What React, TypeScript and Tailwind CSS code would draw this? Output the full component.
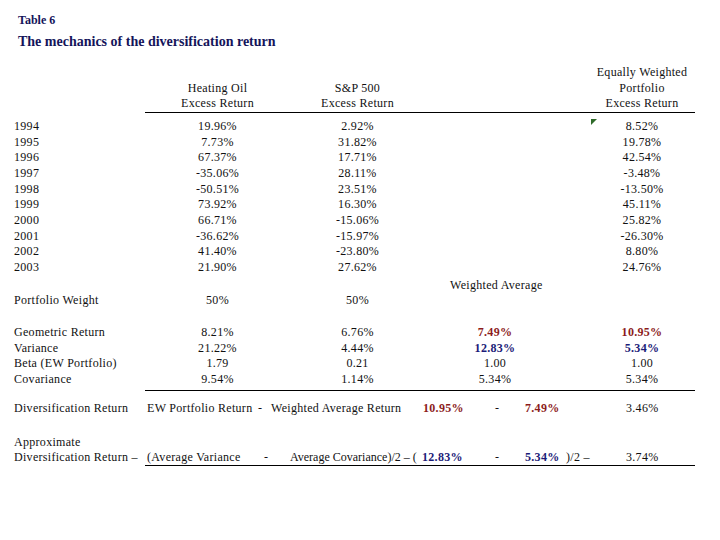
const YEARS = [
  { year: "1994", oil: "19.96%", spx: "2.92%", ew: "8.52%" },
  { year: "1995", oil: "7.73%", spx: "31.82%", ew: "19.78%" },
  { year: "1996", oil: "67.37%", spx: "17.71%", ew: "42.54%" },
  { year: "1997", oil: "-35.06%", spx: "28.11%", ew: "-3.48%" },
  { year: "1998", oil: "-50.51%", spx: "23.51%", ew: "-13.50%" },
  { year: "1999", oil: "73.92%", spx: "16.30%", ew: "45.11%" },
  { year: "2000", oil: "66.71%", spx: "-15.06%", ew: "25.82%" },
  { year: "2001", oil: "-36.62%", spx: "-15.97%", ew: "-26.30%" },
  { year: "2002", oil: "41.40%", spx: "-23.80%", ew: "8.80%" },
  { year: "2003", oil: "21.90%", spx: "27.62%", ew: "24.76%" },
];

const RED = "font-bold text-[#8c1c1c]";
const BLUE = "font-bold text-[#1c1c78]";

type Cell = { text: string; cls?: string };

function Row({
  label,
  cells,
  marker,
}: {
  label: string;
  cells: (Cell | null)[];
  marker?: boolean;
}) {
  const widths = ["w-[145px]", "w-[135px]", "w-[140px]", "w-[154px]"];
  return (
    <div className="flex h-[15.67px] leading-[15.67px]">
      <div className="w-[131px]">{label}</div>
      {cells.map((c, i) => (
        <div key={i} className={`${widths[i]} relative text-center`}>
          {i === 3 && marker && (
            <span className="absolute left-[26px] top-0 h-0 w-0 border-l-[6px] border-b-[6px] border-l-[#2f6b2a] border-b-transparent" />
          )}
          {c && <span className={c.cls}>{c.text}</span>}
        </div>
      ))}
    </div>
  );
}

export default function App() {
  return (
    <div
      className="w-[720px] h-[540px] overflow-hidden whitespace-nowrap bg-white pl-[14px] text-[12px] tracking-[0.3px] text-[#111]"
      style={{ fontFamily: '"Liberation Serif", "Times New Roman", serif' }}
    >
      {/* Title */}
      <div className="pl-[4px] pt-[13px] text-[#14145a] font-bold tracking-normal">
        <div className="h-[14px] text-[12px] leading-[14px]">Table 6</div>
        <div className="mt-[6px] h-[18px] text-[14px] leading-[18px]">
          The mechanics of the diversification return
        </div>
      </div>

      {/* Column headings */}
      <div className="mt-[14px]">
        <Row label="" cells={[null, null, null, { text: "Equally Weighted" }]} />
        <Row label="" cells={[{ text: "Heating Oil" }, { text: "S&P 500" }, null, { text: "Portfolio" }]} />
        <Row label="" cells={[{ text: "Excess Return" }, { text: "Excess Return" }, null, { text: "Excess Return" }]} />
      </div>
      <div className="ml-[131px] w-[550px] border-b border-black" />

      {/* Yearly returns */}
      <div className="mt-[6px]">
        {YEARS.map((y, i) => (
          <Row
            key={y.year}
            label={y.year}
            marker={i === 0}
            cells={[{ text: y.oil }, { text: y.spx }, null, { text: y.ew }]}
          />
        ))}
      </div>

      {/* Summary stats */}
      <div className="mt-[2px]">
        <div className="flex h-[15.67px] leading-[15.67px]">
          <div className="ml-[436px]">Weighted Average</div>
        </div>
        <Row label="Portfolio Weight" cells={[{ text: "50%" }, { text: "50%" }, null, null]} />
      </div>
      <div className="mt-[16px]">
        <Row
          label="Geometric Return"
          cells={[{ text: "8.21%" }, { text: "6.76%" }, { text: "7.49%", cls: RED }, { text: "10.95%", cls: RED }]}
        />
        <Row
          label="Variance"
          cells={[{ text: "21.22%" }, { text: "4.44%" }, { text: "12.83%", cls: BLUE }, { text: "5.34%", cls: BLUE }]}
        />
        <Row label="Beta (EW Portfolio)" cells={[{ text: "1.79" }, { text: "0.21" }, { text: "1.00" }, { text: "1.00" }]} />
        <Row label="Covariance" cells={[{ text: "9.54%" }, { text: "1.14%" }, { text: "5.34%" }, { text: "5.34%" }]} />
      </div>
      <div className="mt-[3px] ml-[131px] w-[550px] border-b border-black" />

      {/* Diversification return */}
      <div className="mt-[10px] flex h-[15.67px] leading-[15.67px]">
        <span className="w-[133px] shrink-0">Diversification Return</span>
        <span className="w-[111px] shrink-0">EW Portfolio Return</span>
        <span className="w-[13px] shrink-0">-</span>
        <span className="w-[152px] shrink-0">Weighted Average Return</span>
        <span className={`w-[72px] shrink-0 ${RED}`}>10.95%</span>
        <span className="w-[30px] shrink-0">-</span>
        <span className={`w-[101px] shrink-0 ${RED}`}>7.49%</span>
        <span>3.46%</span>
      </div>

      <div className="mt-[17px] h-[16px] leading-[16px]">Approximate</div>
      <div className="flex h-[15.67px] leading-[15px]">
        <span className="w-[131px] shrink-0">Diversification Return –</span>
        <div className="flex w-[550px] shrink-0 border-b border-black">
          <span className="w-[119px] shrink-0 pl-[2px]">(Average Variance</span>
          <span className="w-[26px] shrink-0">-</span>
          <span className="w-[132px] shrink-0 tracking-normal">Average Covariance)/2 – (</span>
          <span className={`w-[73px] shrink-0 ${BLUE}`}>12.83%</span>
          <span className="w-[30px] shrink-0">-</span>
          <span className={`w-[41px] shrink-0 ${BLUE}`}>5.34%</span>
          <span className="w-[60px] shrink-0">)/2 –</span>
          <span>3.74%</span>
        </div>
      </div>
    </div>
  );
}
